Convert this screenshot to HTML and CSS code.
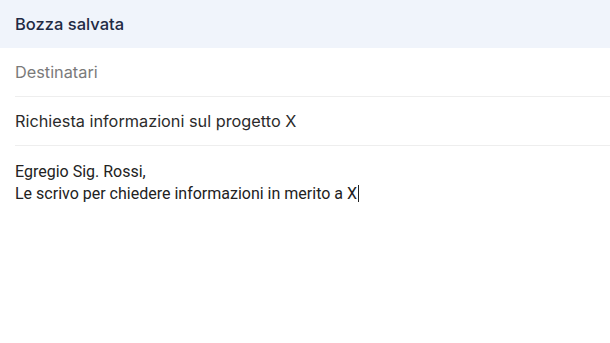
FILE: index.html
```html
<!DOCTYPE html>
<html lang="it">
<head>
    <meta charset="UTF-8">
    <meta name="viewport" content="width=device-width, initial-scale=1.0">
    <title>Bozza</title>
    <link rel="stylesheet" href="styles.css">
</head>
<body>
    <div class="header">Bozza salvata</div>

    <div class="field recipients">Destinatari</div>
    <div class="field subject">Richiesta informazioni sul progetto X</div>

    <div class="message">
        <p>Egregio Sig. Rossi,</p>
        <p>Le scrivo per chiedere informazioni in merito a X<span class="caret"></span></p>
    </div>
</body>
</html>
```

FILE: styles.css
```css
body {
    font-family: Inter, "Noto Sans", sans-serif;
    margin: 0;
    padding: 0;
    background-color: #fff;
}

.header {
    background-color: #f0f4fb;
    color: #1f2a44;
    height: 48px;
    padding: 0 15px;
    display: flex;
    align-items: center;
    font-size: 16.5px;
    font-weight: 500;
}

.field {
    margin-left: 15px;
    height: 48px;
    display: flex;
    align-items: center;
    font-size: 16.3px;
    border-bottom: 1.5px solid #eeeeee;
}

.recipients {
    color: #7a7a7a;
}

.subject {
    color: #2b2b2b;
}

.message {
    padding: 15px 15px;
    font-family: Roboto, "Liberation Sans", sans-serif;
    font-size: 16px;
    color: #222;
}

.message p {
    margin: 0;
    line-height: 22px;
}

.caret {
    display: inline-block;
    width: 1px;
    height: 17px;
    margin-left: 1px;
    background-color: #222;
    vertical-align: -3px;
}
```
